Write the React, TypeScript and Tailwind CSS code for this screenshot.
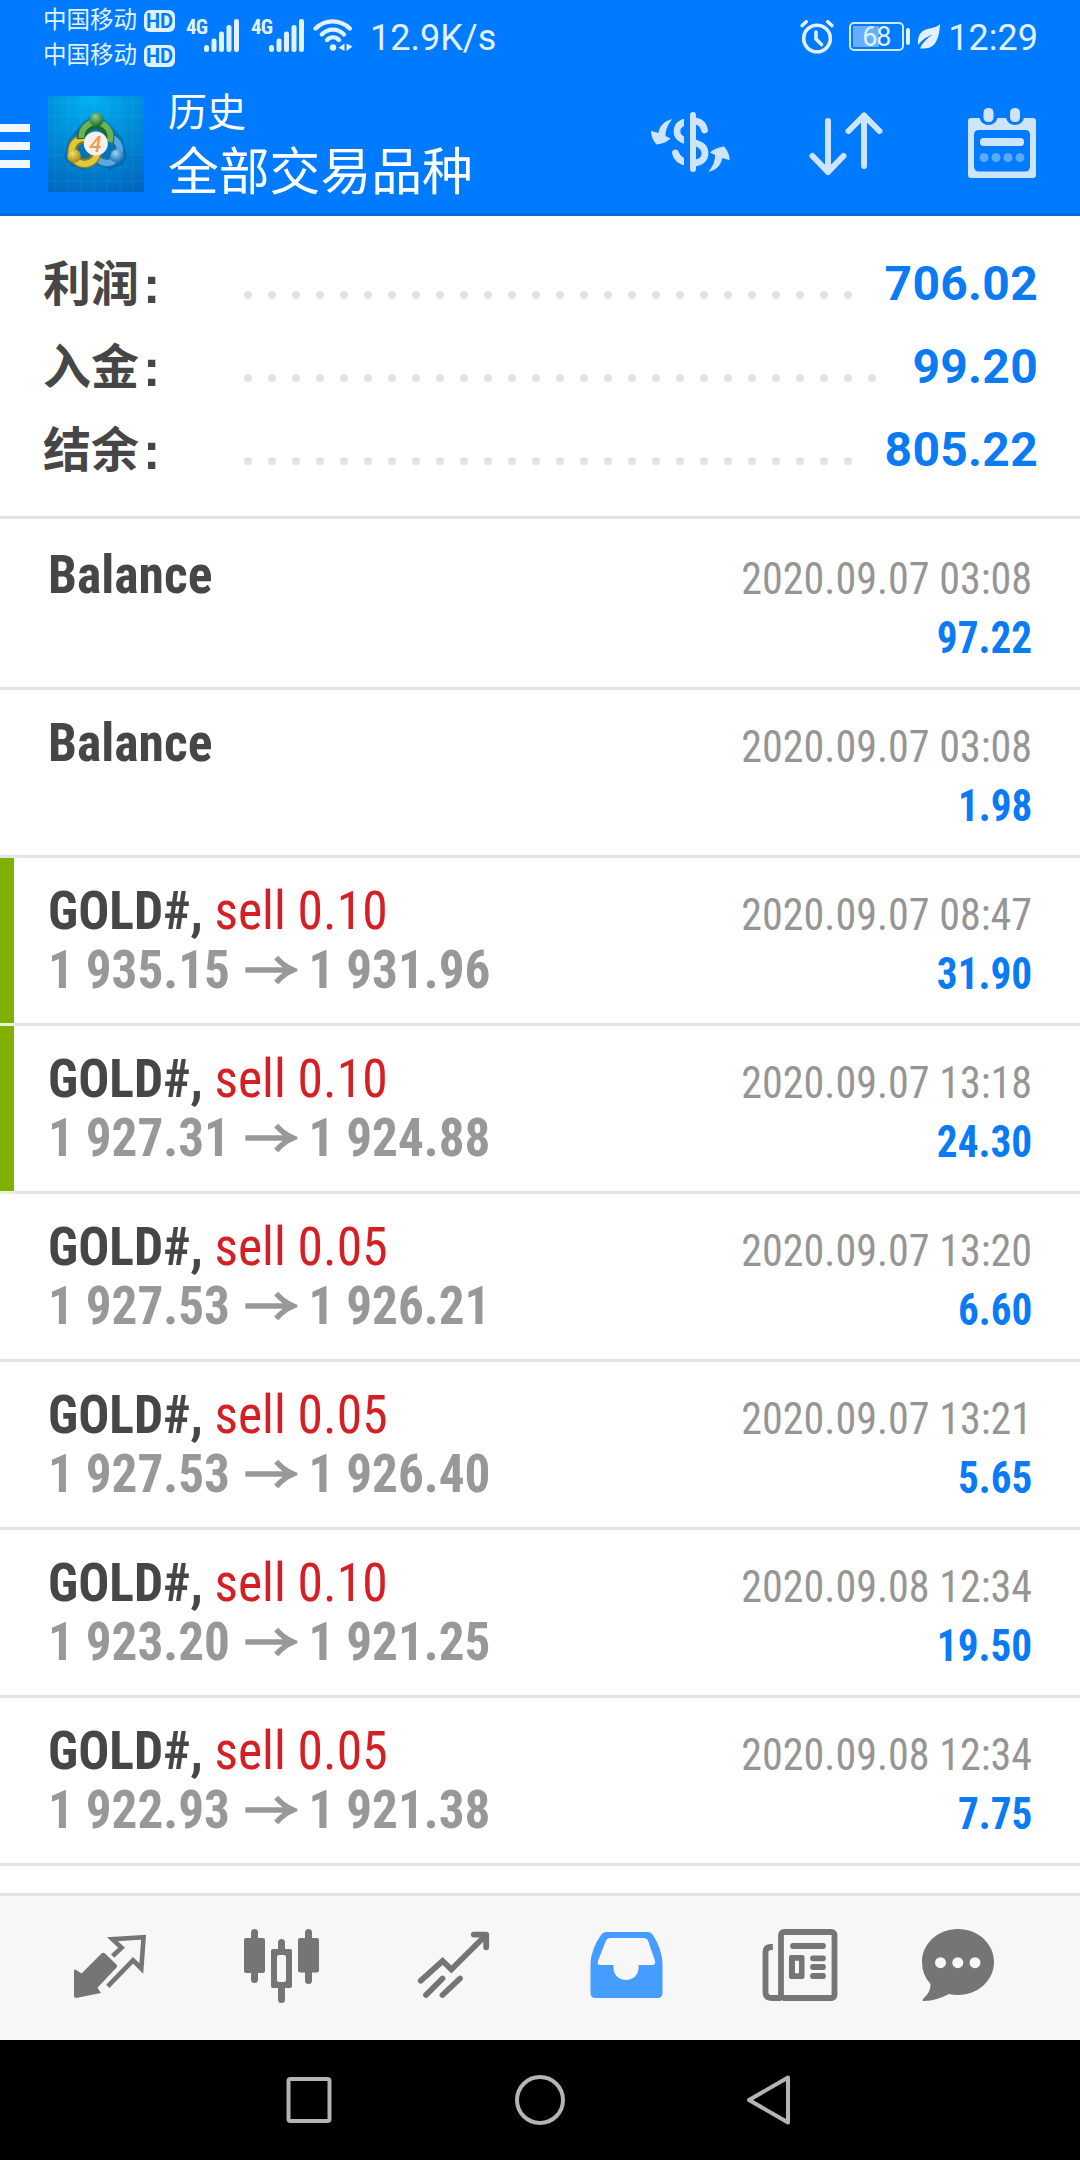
import type { ReactNode } from 'react';

type Deal = {
  symbol: string;
  side?: string;
  open?: string;
  close?: string;
  time: string;
  profit: string;
  marked?: boolean;
};

const summary = [
  { label: '利润', value: '706.02', dots: 26 },
  { label: '入金', value: '99.20', dots: 27 },
  { label: '结余', value: '805.22', dots: 26 },
];

const deals: Deal[] = [
  { symbol: 'Balance', time: '2020.09.07 03:08', profit: '97.22' },
  { symbol: 'Balance', time: '2020.09.07 03:08', profit: '1.98' },
  { symbol: 'GOLD#,', side: 'sell 0.10', open: '1 935.15', close: '1 931.96', time: '2020.09.07 08:47', profit: '31.90', marked: true },
  { symbol: 'GOLD#,', side: 'sell 0.10', open: '1 927.31', close: '1 924.88', time: '2020.09.07 13:18', profit: '24.30', marked: true },
  { symbol: 'GOLD#,', side: 'sell 0.05', open: '1 927.53', close: '1 926.21', time: '2020.09.07 13:20', profit: '6.60' },
  { symbol: 'GOLD#,', side: 'sell 0.05', open: '1 927.53', close: '1 926.40', time: '2020.09.07 13:21', profit: '5.65' },
  { symbol: 'GOLD#,', side: 'sell 0.10', open: '1 923.20', close: '1 921.25', time: '2020.09.08 12:34', profit: '19.50' },
  { symbol: 'GOLD#,', side: 'sell 0.05', open: '1 922.93', close: '1 921.38', time: '2020.09.08 12:34', profit: '7.75' },
];

function Carrier() {
  return (
    <div className="flex h-[35px] items-center gap-[7px]">
      <span className="text-[23.5px] leading-none">中国移动</span>
      <span className="flex h-[22px] w-[31px] items-center justify-center rounded-[6px] bg-[#e2f1ff] font-['Roboto'] text-[20px] leading-none font-bold text-[#007aff]">
        HD
      </span>
    </div>
  );
}

function Signal() {
  return (
    <div className="flex h-[33px] w-[53px]">
      <span className="w-[18px] font-['Roboto_Condensed'] text-[21px] leading-[17px] font-bold tracking-[-0.8px]">4G</span>
      <svg viewBox="0 0 35 33" className="h-[33px] w-[35px]" fill="currentColor">
        <rect x="0" y="26" width="5" height="7" rx="2.5" />
        <rect x="7.5" y="19.5" width="5" height="13.5" rx="2.2" />
        <rect x="15" y="12.5" width="5" height="20.5" rx="2.2" />
        <rect x="22.5" y="6" width="5" height="27" rx="2.2" />
        <rect x="30" y="0" width="5" height="33" rx="2.2" />
      </svg>
    </div>
  );
}

function StatusBar() {
  return (
    <div className="flex h-[72px] items-start pr-[42px] pl-[43px] text-[#e2f1ff]">
      <div className="mt-[3px] flex flex-col">
        <Carrier />
        <Carrier />
      </div>
      <div className="mt-[19px] ml-[11px] flex gap-3">
        <Signal />
        <Signal />
      </div>
      <svg viewBox="0 0 40 34" className="mt-[18px] ml-[9px] h-[34px] w-10" fill="none" stroke="currentColor" strokeWidth="4.4" strokeLinecap="round">
        <path d="M2.6 10.5C12 1 27 1 36.8 10.5" />
        <path d="M8.8 16.5C15 10 25 10 31 16.5" />
        <path d="M14 22C17.5 18.5 22.5 18.5 26 22" />
        <circle cx="20" cy="29.5" r="3.2" fill="currentColor" stroke="none" />
        <path d="M31.5 25.5V33L25.5 29.8ZM33.5 33V25.5L39.5 28.5Z" fill="currentColor" stroke="none" />
      </svg>
      <span className="mt-[17px] ml-[17px] text-[36px] leading-[42px]">12.9K/s</span>

      <svg viewBox="0 0 34 34" className="mt-[20px] ml-auto h-[34px] w-[34px]" fill="none" stroke="currentColor" strokeWidth="3.6" strokeLinecap="round">
        <circle cx="17" cy="18.5" r="13.3" />
        <path d="M16 12v7l5.5 5.5" />
        <path d="M2.2 5.5l4-3.8M31.8 5.5l-4-3.8" />
      </svg>
      <div className="mt-[22px] ml-[15px] flex h-[29px] w-[55px] rounded-[5px] border-2 border-[#cfe8ff] p-[2px]">
        <div className="flex h-full w-[26px] items-center justify-start bg-[#66afff]">
          <span className="ml-[9px] pt-px text-[27px] leading-none tracking-[-1.2px] whitespace-nowrap">68</span>
        </div>
      </div>
      <div className="mt-[28px] ml-[2px] h-[17px] w-[4px] rounded-sm bg-[#e2f1ff]" />
      <svg viewBox="0 0 23 25" className="mt-[24px] ml-[7px] h-[25px] w-[24px]">
        <path d="M22.5 0C22 12 19 24.5 7 24.5H2.5C5 19 9 14.5 15.5 10.5C8 13 3.5 17 .8 21C-.5 14 2 7 10 5C15 3.7 19.5 3.5 22.5 0Z" fill="currentColor" />
      </svg>
      <span className="mt-[17px] ml-[7px] text-[36px] leading-[42px]">12:29</span>
    </div>
  );
}

function Logo() {
  return (
    <svg viewBox="0 0 96 96" className="h-24 w-24">
      <defs>
        <radialGradient id="sky" cx="0.45" cy="0" r="1.1">
          <stop offset="0" stopColor="#00b2f0" />
          <stop offset="0.5" stopColor="#008bd8" />
          <stop offset="1" stopColor="#0066bd" />
        </radialGradient>
        <radialGradient id="green" cx="0.4" cy="0.3" r="0.7">
          <stop offset="0" stopColor="#8fd08a" />
          <stop offset="1" stopColor="#1a6e2c" />
        </radialGradient>
        <radialGradient id="yellow" cx="0.4" cy="0.3" r="0.7">
          <stop offset="0" stopColor="#f2e06a" />
          <stop offset="1" stopColor="#a8870c" />
        </radialGradient>
        <radialGradient id="blue" cx="0.4" cy="0.3" r="0.7">
          <stop offset="0" stopColor="#9ad4f7" />
          <stop offset="1" stopColor="#1a6cb0" />
        </radialGradient>
      </defs>
      <rect width="96" height="96" fill="url(#sky)" />
      <path d="M7 0V96M20 0V96M33 0V96M46 0V96M59 0V96M72 0V96M85 0V96M0 7H96M0 20H96M0 33H96M0 46H96M0 59H96M0 72H96M0 85H96" stroke="#fff" strokeOpacity="0.06" />
      <path d="M34 74L48 68L62 74L75 68L79 60L74 42L64 30L48 16L33 28L20 44L16 62L24 70Z" fill="#044a80" opacity="0.35" />
      <circle cx="59" cy="54" r="12.5" fill="none" stroke="#1f6ea8" strokeWidth="9.5" />
      <circle cx="59" cy="54" r="13" fill="none" stroke="#5aa9dc" strokeWidth="6" />
      <circle cx="36.5" cy="55" r="12.5" fill="none" stroke="#8c7c14" strokeWidth="9.5" />
      <circle cx="36.5" cy="55" r="13" fill="none" stroke="#dcc93c" strokeWidth="6" />
      <path d="M33.5 43A14 14 0 1 1 61 46" fill="none" stroke="#20682a" strokeWidth="9.5" />
      <path d="M33.5 42A14.5 14.5 0 1 1 61.5 46" fill="none" stroke="#6ab15c" strokeWidth="6" />
      <circle cx="48.7" cy="23.5" r="7" fill="url(#green)" />
      <circle cx="26" cy="60" r="6.8" fill="url(#yellow)" />
      <circle cx="69" cy="60" r="6.8" fill="url(#blue)" />
      <circle cx="47.8" cy="47.5" r="12" fill="#f4f1f0" />
      <text x="47.5" y="55.5" textAnchor="middle" fontFamily="Roboto" fontSize="22" fontStyle="italic" fontWeight="500" fill="#f39a4c">4</text>
    </svg>
  );
}

function Header() {
  return (
    <header className="h-[216px] bg-[#007aff] shadow-[inset_0_-3px_0_#086bdb]">
      <StatusBar />
      <div className="flex h-36 items-center pr-[42px]">
        <div className="flex w-[30px] flex-col gap-[10px] pt-1">
          <div className="h-2 bg-[#f0f7ff]" />
          <div className="h-2 bg-[#f0f7ff]" />
          <div className="h-2 bg-[#f0f7ff]" />
        </div>
        <div className="ml-[18px]">
          <Logo />
        </div>
        <div className="ml-[24px] flex flex-col pt-[2px] text-white">
          <span className="text-[39px] leading-[56px]">历史</span>
          <span className="text-[50.8px] leading-[64px]">全部交易品种</span>
        </div>

        <svg viewBox="0 0 80 68" className="ml-auto h-[68px] w-20" fill="none" stroke="#cde4fb">
          <path
            d="M54.5 20C53 13 49 11 43 11C33 11 27 14.5 27 21.5C27 29 35 31 43 32.5C51 34 55 37 55 43C55 50 50 53 43 53C33 53 27.5 50 25.5 43"
            strokeWidth="6.8"
            strokeLinecap="round"
          />
          <path d="M37 0V68" stroke="#007aff" strokeWidth="6" />
          <path d="M43 5V59" strokeWidth="6" strokeLinecap="round" />
          <g fill="#cde4fb" stroke="none">
            <path d="M22.3 9C14 11 9.5 16 8.3 23L1 20.8C1 26 3 31 6.5 34.5C12 34 17 32 20.7 28.5L15.5 26C15.5 20 18 14 22.3 9Z" />
            <path transform="rotate(180 40.3 35.5)" d="M22.3 9C14 11 9.5 16 8.3 23L1 20.8C1 26 3 31 6.5 34.5C12 34 17 32 20.7 28.5L15.5 26C15.5 20 18 14 22.3 9Z" />
          </g>
        </svg>
        <svg viewBox="0 0 80 76" className="ml-[76px] h-[76px] w-20" fill="none" stroke="#cde4fb" strokeWidth="6" strokeLinecap="round" strokeLinejoin="round">
          <path d="M22 15V66M6.5 50L22 66L37.5 50" />
          <path d="M58 60V9.5M42.5 25L58 9.5L73.5 25" />
        </svg>
        <svg viewBox="0 0 72 76" className="ml-20 h-[76px] w-[72px]" fill="#cde4fb">
          <path fillRule="evenodd" d="M5 12H13.5Q15.5 19 22.5 19T31.5 12H40Q42 19 49 19T58 12H67Q70 12 70 15V69Q70 72 67 72H5Q2 72 2 69V15Q2 12 5 12ZM13 24Q8 24 8 29V60Q8 65.5 13 65.5H59Q64 65.5 64 60V29Q64 24 59 24Z" />
          <rect x="17.5" y="2" width="10" height="14" rx="4.5" />
          <rect x="44" y="2" width="10" height="14" rx="4.5" />
          <rect x="14" y="32" width="44" height="8" rx="3.5" />
          <g fill="#5ba9fb">
            <circle cx="18" cy="51.5" r="4.5" />
            <circle cx="30" cy="51.5" r="4.5" />
            <circle cx="42" cy="51.5" r="4.5" />
            <circle cx="54" cy="51.5" r="4.5" />
          </g>
        </svg>
      </div>
    </header>
  );
}

function Summary() {
  return (
    <section className="h-[303px] border-b-[3px] border-[#e5e5e5] pt-[26px] pr-[43px] pl-[43px]">
      {summary.map((row) => (
        <div key={row.label} className="flex h-[83px] items-center text-[48px] leading-none font-bold">
          <span className="w-[97px] pt-[2px] text-[#464646]">{row.label}</span>
          <span className="w-[104px] pt-[2px] pl-[3px] font-['Liberation_Sans'] text-[52px] text-[#464646]">:</span>
          <div className="flex gap-4 pt-[22px]">
            {Array.from({ length: row.dots }, (_, i) => (
              <span key={i} className="size-2 rounded-full bg-[#e3e3e3]" />
            ))}
          </div>
          <span className="-mr-px ml-auto tracking-[0.3px] text-[#0a7af5]">{row.value}</span>
        </div>
      ))}
    </section>
  );
}

function DealRow({ deal }: { deal: Deal }) {
  return (
    <li className="flex h-[168px] font-['Roboto_Condensed']">
      <div className={deal.marked ? 'w-[14px] border-b-[3px] border-[#e9f3d3] bg-[#80b000]' : 'w-[14px] border-b-[3px] border-[#e5e5e5]'} />
      <div className="flex-1 border-b-[3px] border-[#e5e5e5] pt-[23px] pr-[48px] pl-[34px] leading-[60px]">
        <div className="flex h-[59px] items-start justify-between">
          <div className="flex origin-left scale-x-[0.955] text-[54px]">
            <span className="font-bold text-[#464646]">{deal.symbol}</span>
            {deal.side && <span className="ml-[12px] font-[450] text-[#d42024]">{deal.side}</span>}
          </div>
          <span className="origin-right scale-x-[0.935] text-[45px] leading-[68px] text-[#959595]">{deal.time}</span>
        </div>
        <div className="flex h-[59px] items-start font-bold text-[#98989b]">
          {deal.open && (
            <div className="flex origin-left scale-x-[0.948] items-center text-[54px]">
              <span>{deal.open}</span>
              <svg viewBox="0 0 52 28" preserveAspectRatio="none" className="mr-[12px] ml-[16px] h-7 w-[55px]" fill="none" stroke="currentColor" strokeWidth="5.5">
                <path d="M0 14H47" />
                <path d="M31 1.5Q38 10 48 14Q38 18 31 26.5" />
              </svg>
              <span>{deal.close}</span>
            </div>
          )}
          <span className="ml-auto origin-right scale-x-[0.915] text-[45px] leading-[68px] text-[#0a7af5]">{deal.profit}</span>
        </div>
      </div>
    </li>
  );
}

function Tab({ className, viewBox = '0 0 80 80', children }: { className: string; viewBox?: string; children: ReactNode }) {
  return (
    <svg viewBox={viewBox} className={`h-20 w-20 shrink-0 ${className}`} fill="currentColor">
      {children}
    </svg>
  );
}

function TabBar() {
  return (
    <nav className="flex h-[147px] border-t-[3px] border-[#e2e2e2] bg-[#f7f7f7] pt-[29px] text-[#757575]">
      <Tab className="ml-[70px]" viewBox="0 -5 80 80">
        <path d="M5.5 39.5L11.5 43.5L31.5 23.5Q33.3 22 35 23.5L46.5 34.5Q48 36 46.5 37.5L27.5 57.7L31 63L6 68Q4 68 4 66V40Z" />
        <path d="M42.6 26L51.6 17.7L42.5 9.3L73.6 7.2L71.3 38.5L63 30.3L37.8 56.3" fill="none" stroke="currentColor" strokeWidth="4.6" />
      </Tab>
      <Tab className="ml-[90px]">
        <rect x="11" y="4" width="7" height="54" rx="3.5" />
        <rect x="4" y="13" width="21" height="35" rx="2" />
        <rect x="65" y="4" width="7" height="55" rx="3.5" />
        <rect x="58" y="13" width="21" height="34.5" rx="2" />
        <path d="M38 28V17.5a3.5 3.5 0 0 1 7 0V28ZM38 60V74.5a3.5 3.5 0 0 0 7 0V60Z" />
        <path fillRule="evenodd" d="M33 24H50Q52 24 52 26V61Q52 63 50 63H33Q31 63 31 61V26Q31 24 33 24ZM39 30Q37 30 37 32V55Q37 57 39 57H44Q46 57 46 55V32Q46 30 44 30Z" />
      </Tab>
      <Tab className="ml-[95px]">
        <g fill="none" stroke="currentColor" strokeWidth="5.8" strokeLinecap="round" strokeLinejoin="round">
          <path d="M5.8 55.7L27.6 36L36.4 44.5L71 10" strokeLinejoin="miter" />
          <path d="M58.8 9.6H71.2V22.3" />
          <path d="M11 70L27.5 53.5M27.5 70L45 53.5" />
        </g>
      </Tab>
      <Tab className="ml-[95px] text-[#459dff]" viewBox="0 -5 80 80">
        <path
          fillRule="evenodd"
          d="M16 2H58Q61 2 63 5Q72 19 72.5 34V63Q72.5 68 67.5 68H5.5Q.5 68 .5 63V34Q1 19 11 5Q13 2 16 2ZM20 8Q17 8 16 10.5L8 31Q7 35 10 35H23.5V38C23.5 45 29 50 36 50S48.5 45 48.5 38V35H62Q66 35 65 31L58 10.5Q57 8 54 8Z"
        />
      </Tab>
      <Tab className="ml-[90px]">
        <g fill="none" stroke="currentColor" strokeWidth="5.8">
          <rect x="21" y="7" width="53.5" height="66" rx="3" />
          <path d="M12.8 22H11Q5.5 22 5.5 27.5V67Q5.5 73 11.5 73H21" />
          <path d="M33 21H63M53 33.3H63M53 42H63M53 51H63" strokeLinecap="round" />
        </g>
        <path fillRule="evenodd" d="M31 30H42.5Q44.5 30 44.5 32V52Q44.5 54 42.5 54H31Q29 54 29 52V32Q29 30 31 30ZM35 35.7V48.3H39V35.7Z" />
      </Tab>
      <Tab className="ml-[80px]">
        <path
          fillRule="evenodd"
          d="M38 4C58 4 74 18.5 74 37S58 70 38 70Q33 70 29 69Q17 75.5 4 76Q1.5 76 3 74Q11 67 10.5 59Q2 50 2 37C2 18.5 18 4 38 4ZM20.5 32.2A5.5 5.5 0 1 0 20.5 43.2A5.5 5.5 0 1 0 20.5 32.2ZM37.8 32.2A5.5 5.5 0 1 0 37.8 43.2A5.5 5.5 0 1 0 37.8 32.2ZM55 32.2A5.5 5.5 0 1 0 55 43.2A5.5 5.5 0 1 0 55 32.2Z"
        />
      </Tab>
    </nav>
  );
}

function SystemNav() {
  return (
    <div className="flex h-[120px] items-center justify-center gap-[174px] bg-black">
      <svg viewBox="0 0 56 56" className="size-14" fill="none" stroke="#b4b4b4" strokeWidth="4">
        <rect x="6.5" y="7" width="41" height="42" rx="2" />
      </svg>
      <svg viewBox="0 0 56 56" className="size-14" fill="none" stroke="#b4b4b4" strokeWidth="4">
        <circle cx="28" cy="28" r="23" />
      </svg>
      <svg viewBox="0 0 56 56" className="size-14" fill="none" stroke="#b4b4b4" strokeWidth="4" strokeLinejoin="round">
        <path d="M46 5.5V50.5L7 28Z" />
      </svg>
    </div>
  );
}

export default function App() {
  return (
    <div className="flex h-[2160px] w-[1080px] flex-col overflow-hidden bg-white font-['Roboto','Noto_Sans_CJK_SC',sans-serif]">
      <Header />
      <Summary />
      {/* first row sits 3px below the summary divider */}
      <ul className="flex-1 overflow-hidden pt-[3px]">
        {deals.map((deal, i) => (
          <DealRow key={i} deal={deal} />
        ))}
      </ul>
      <TabBar />
      <SystemNav />
    </div>
  );
}
